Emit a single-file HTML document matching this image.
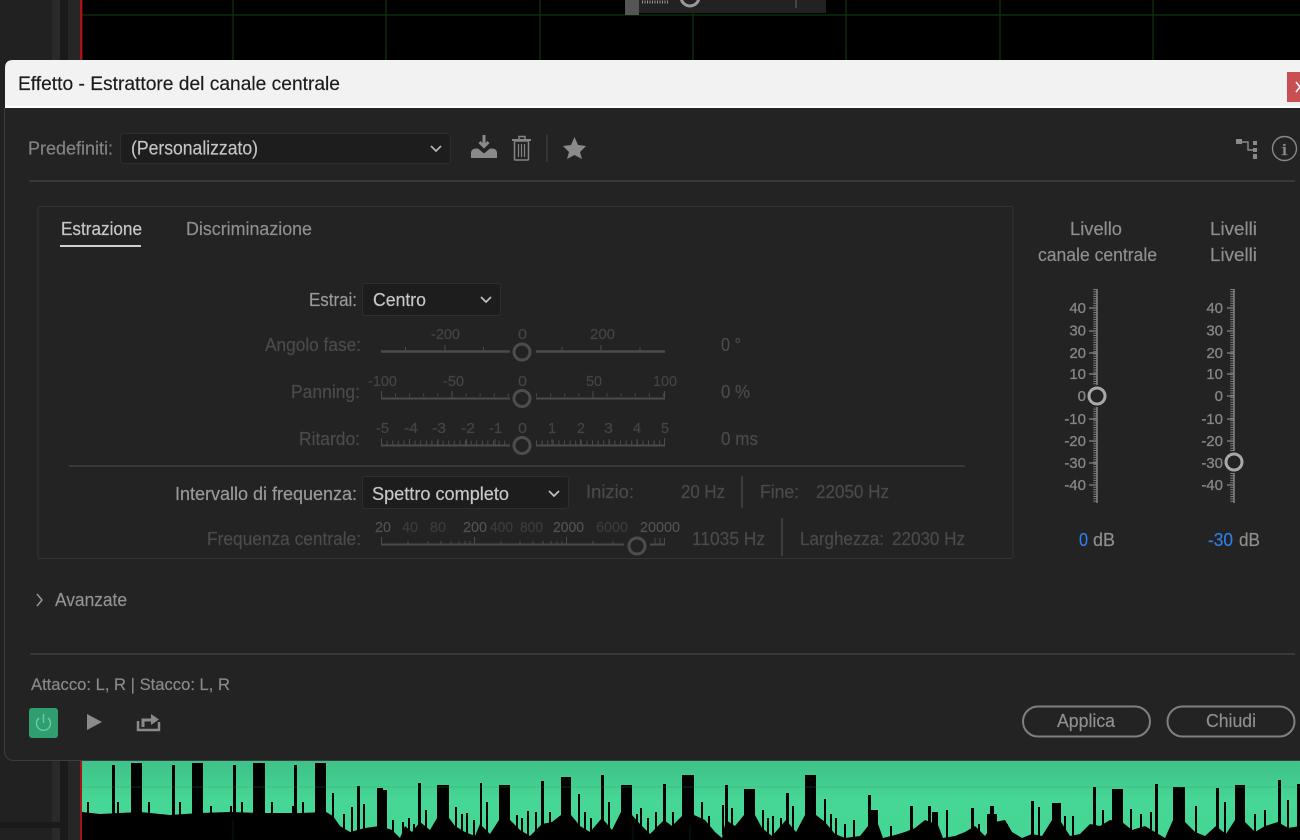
<!DOCTYPE html>
<html lang="it">
<head>
<meta charset="utf-8">
<title>Effetto - Estrattore del canale centrale</title>
<style>
html,body{margin:0;padding:0;background:#000;width:1300px;height:840px;overflow:hidden}
svg{display:block;filter:blur(.35px)}
text{font-family:"Liberation Sans",sans-serif;font-size:18px;color:#8f8f8f;fill:currentColor;stroke:currentColor;stroke-width:.18}
.d{color:#4b4b4b}
.a{color:#c8c8c8}
.s{font-size:15px;color:#454545}
.sd{font-size:15px;color:#3c3c3c}
.sb{font-size:15px;color:#525252}
.sc{font-size:15px;color:#858585;text-anchor:end;stroke-width:.3}
.t{stroke:#4b4b4b;fill:none}
.k{fill:#232323;stroke:#4d4d4d;stroke-width:3}
.kb{fill:#232323;stroke:#a8a8a8;stroke-width:3}
</style>
</head>
<body>
<svg width="1300" height="840" viewBox="0 0 1300 840" xmlns="http://www.w3.org/2000/svg">
<defs>
<linearGradient id="g" x1="0" y1="0" x2="0" y2="1"><stop offset="0" stop-color="#3fc189"/><stop offset=".25" stop-color="#42cb8e"/><stop offset=".5" stop-color="#46d695"/><stop offset="1" stop-color="#45d594"/></linearGradient>
</defs>
<!-- background -->
<rect width="1300" height="840" fill="#000"/>
<rect x="0" y="0" width="80" height="840" fill="#212121"/>
<rect x="52" y="0" width="8" height="840" fill="#2a2a2a"/>
<rect x="60" y="0" width="8" height="840" fill="#1a1a1a"/>
<rect x="68" y="0" width="12" height="840" fill="#262626"/>
<rect x="0" y="822" width="62" height="6" fill="#1a1a1a"/>
<path d="M82 15H1300M233 0V60M386 0V60M540 0V60M693 0V60M846 0V60M1000 0V60M1153 0V60" stroke="#0c360c" stroke-width="1.2" fill="none"/>
<rect x="80" y="0" width="2.4" height="840" fill="#a81318"/>
<!-- top floating control -->
<rect x="625" y="0" width="201" height="13" fill="#222"/>
<rect x="625" y="0" width="14" height="15" fill="#555"/>
<path d="M642 2H668" stroke="#999" stroke-width="3" stroke-dasharray="1 1.5"/>
<circle cx="690" cy="-3" r="9" fill="#222" stroke="#999" stroke-width="3"/>
<path d="M796 0V8" stroke="#666"/>

<!-- waveform -->
<rect x="82" y="760" width="1218" height="80" fill="url(#g)"/>
<path fill="#000" d="M82 812L100 814L120 813L140 812L170 815L200 813L230 812L260 813L300 813L326 812L333 816L340 826L350 832L365 828L380 826L392 830L400 838L405 826L412 832L420 822L430 830L437 818L449 818L455 826L465 832L475 836L480 824L490 834L499 820L510 820L520 830L530 836L542 824L552 822L561 815L571 815L580 826L590 832L602 818L612 830L621 812L632 815L640 824L650 834L664 820L672 826L682 816L694 815L705 820L715 832L722 838L726 820L735 826L744 815L755 815L762 828L772 836L786 820L796 832L805 815L816 815L825 822L835 834L845 838L860 836L868 826L878 824L883 838L895 835L905 832L915 828L925 820L938 825L943 838L955 836L965 832L975 826L985 836L995 822L1005 820L1012 832L1022 838L1032 834L1042 836L1052 820L1061 822L1070 836L1080 834L1090 824L1100 826L1110 820L1122 822L1132 830L1145 826L1155 832L1165 838L1173 820L1185 822L1195 832L1205 836L1216 826L1226 834L1235 820L1245 822L1255 832L1265 826L1278 822L1288 828L1300 826V840H82Z"/>
<path fill="#000" d="M112 765h3v60h-3zM131 763h11v60h-11zM172 765h3v60h-3zM192 763h11v60h-11zM233 765h3v60h-3zM253 763h12v60h-12zM294 765h3v60h-3zM315 763h11v60h-11z
M87 802h2v20h-2zM117 802h2v20h-2zM148 802h2v20h-2zM179 802h2v20h-2zM210 806h2v16h-2zM230 806h2v16h-2zM241 802h2v20h-2zM271 802h2v20h-2zM292 806h2v16h-2zM302 802h2v20h-2z
M332 793h2v40h-2zM343 814h2v20h-2zM351 807h2v28h-2zM357 786h3v50h-3zM363 804h2v30h-2zM377 788h6v50h-6zM383 790h4v48h-4zM392 820h2v16h-2z
M402 822h2v18h-2zM408 818h2v22h-2zM413 824h2v16h-2zM418 783h3v50h-3zM437 785h12v40h-12zM425 810h2v20h-2zM455 807h2v24h-2zM461 814h2v26h-2zM466 813h2v25h-2zM473 820h2v20h-2zM480 783h2v50h-2zM486 802h2v36h-2zM499 785h11v40h-11zM516 815h2v20h-2zM521 818h2v22h-2zM527 811h2v25h-2zM541 781h3v50h-3zM535 812h2v24h-2zM549 812h2v22h-2zM561 777h9v50h-9zM568 777h3v50h-3zM578 794h2v36h-2zM584 812h2v26h-2zM590 818h2v20h-2zM601 775h3v50h-3zM608 802h2v34h-2zM621 785h11v40h-11zM636 814h2v26h-2zM640 808h2v28h-2zM647 818h2v22h-2zM663 784h3v50h-3zM655 812h2v24h-2zM672 812h2v24h-2zM682 775h8v50h-8zM689 775h5v50h-5zM701 802h2v30h-2zM708 816h2v24h-2zM725 785h3v50h-3zM722 805h2v30h-2zM731 808h2v32h-2zM744 789h11v40h-11zM762 810h2v24h-2zM767 818h2v22h-2zM772 816h2v24h-2zM780 818h2v22h-2zM786 793h3v45h-3zM792 806h2v34h-2zM805 775h6v50h-6zM811 775h5v50h-5zM824 799h2v40h-2zM830 814h2v24h-2zM835 818h2v22h-2zM844 824h2v16h-2zM853 820h2v20h-2zM868 795h3v44h-3zM868 810h10v30h-10zM890 826h2v14h-2zM910 806h3v34h-3zM928 806h3v34h-3zM932 812h6v28h-6zM946 810h2v30h-2zM971 808h3v32h-3zM978 824h2v16h-2zM990 806h4v34h-4zM987 814h10v26h-10zM1006 824h2v16h-2zM1031 801h3v36h-3zM1038 807h2v33h-2zM1052 803h9v37h-9zM1064 816h2v24h-2zM1072 816h2v24h-2zM1093 787h3v45h-3zM1102 810h2v25h-2zM1112 789h11v40h-11zM1130 809h2v24h-2zM1140 814h2v24h-2zM1155 784h3v50h-3zM1150 812h2v20h-2zM1173 787h12v40h-12zM1195 806h2v28h-2zM1216 788h3v42h-3zM1224 802h2v36h-2zM1235 785h10v40h-10zM1254 814h2v20h-2zM1264 810h2v24h-2zM1278 780h3v50h-3zM1287 800h2v34h-2zM1297 784h3v50h-3z"/>
<path d="M82 787H1300" stroke="#2f9a68" stroke-width=".7" opacity=".35" fill="none"/>
<path d="M233 840V820M633 840V825M690 840V825" stroke="#0d4a2a" stroke-width=".8" opacity=".5" fill="none"/>

<!-- dialog -->
<path d="M4 108H1300V760H14Q4 760 4 750Z" fill="#232323"/>
<path d="M4.500 108V750Q4.500 760 14 760.500H1300" fill="none" stroke="#3d3d3d"/>
<path d="M5 108V68Q5 60 13 60H1300V108Z" fill="#f2f2f2"/>
<rect x="5" y="106" width="1295" height="2" fill="#fff"/>
<rect x="1287" y="72" width="13" height="30" fill="#c94f52"/>
<path d="M1296 82L1300 87L1296 92" stroke="#fff" stroke-width="1.600" fill="none"/>
<text x="18" y="90" textLength="322" lengthAdjust="spacingAndGlyphs" style="font-size:19.500px;color:#1c1c1c">Effetto - Estrattore del canale centrale</text>

<!-- toolbar -->
<text x="28" y="154.500" textLength="85" lengthAdjust="spacingAndGlyphs" style="color:#848484">Predefiniti:</text>
<rect x="120.500" y="133.500" width="330" height="30" rx="3" fill="#1d1d1d" stroke="#2d2d2d"/>
<text x="131" y="154.500" textLength="127" lengthAdjust="spacingAndGlyphs" style="font-size:19px;color:#c4c4c4">(Personalizzato)</text>
<path d="M431 146L436 151L441 146" stroke="#b5b5b5" stroke-width="1.700" fill="none"/>
<path d="M484 135V146M479.500 142L484 146.500L488.500 142" stroke="#8a8a8a" stroke-width="3" fill="none"/>
<path d="M471 158V152Q472 148.500 476 148.500H478L484 153.500L490 148.500H492Q496 148.500 497 152V158Z" fill="#8a8a8a"/>
<g stroke="#858585" fill="none"><path d="M512 140H531" stroke-width="2"/><path d="M519 139V136.500H525V139" stroke-width="1.500"/><rect x="514.500" y="141" width="14" height="19" rx="1" stroke-width="1.500"/><path d="M518.500 144V157M521.500 144V157M524.500 144V157" stroke-width="1.200"/></g>
<path d="M547 135V162" stroke="#3a3a3a" stroke-width="1.500"/>
<path d="M574.500 137L578 145L586 146L580 152L582 159L574.500 155L567 159L569 152L563 146L571 145Z" fill="#8a8a8a"/>
<g fill="#8a8a8a"><rect x="1236" y="139" width="6" height="5"/><rect x="1253" y="141" width="4" height="4"/><rect x="1253" y="148" width="4" height="4"/><rect x="1253" y="154" width="4" height="5"/></g>
<path d="M1242 142H1248V150H1253" stroke="#8a8a8a" stroke-width="1.400" fill="none"/>
<circle cx="1284.500" cy="148.500" r="12" fill="none" stroke="#888" stroke-width="1.400"/>
<text x="1281" y="155" textLength="7" lengthAdjust="spacingAndGlyphs" style="font-family:'Liberation Serif',serif;font-size:17px;color:#8d8d8d">i</text>
<rect x="29" y="180" width="1266" height="2" fill="#383838"/>

<!-- panel -->
<rect x="38" y="206.500" width="975" height="352" rx="2" fill="#232323" stroke="#333"/>
<text x="61" y="235" textLength="81" lengthAdjust="spacingAndGlyphs" class="a">Estrazione</text>
<rect x="60" y="245" width="81" height="2" fill="#d0d0d0"/>
<text x="186" y="235" textLength="126" lengthAdjust="spacingAndGlyphs">Discriminazione</text>

<text x="309" y="306" textLength="48" lengthAdjust="spacingAndGlyphs" style="color:#9a9a9a">Estrai:</text>
<rect x="362.500" y="283.500" width="138" height="32" rx="3" fill="#1d1d1d" stroke="#2e2e2e"/>
<text x="373" y="306" textLength="53" lengthAdjust="spacingAndGlyphs" class="a">Centro</text>
<path d="M481 297L486 302L491 297" stroke="#c0c0c0" stroke-width="1.700" fill="none"/>

<!-- fase -->
<text x="265" y="351" textLength="96" lengthAdjust="spacingAndGlyphs" class="d">Angolo fase:</text>
<text x="431" y="339" textLength="29" lengthAdjust="spacingAndGlyphs" class="s">-200</text>
<text x="518" y="339" textLength="9" lengthAdjust="spacingAndGlyphs" class="s">0</text>
<text x="590" y="339" textLength="25" lengthAdjust="spacingAndGlyphs" class="s">200</text>
<path class="t" stroke-width="2.500" d="M381 351.500H510M536 351.500H665"/>
<path class="t" d="M405.500 347V351M445 345V351M483.500 347V351M562 347V351M601 345V351M640 347V351"/>
<circle class="k" cx="522" cy="352" r="8"/>
<text x="721" y="351" textLength="20" lengthAdjust="spacingAndGlyphs" class="d">0 °</text>

<!-- panning -->
<text x="291" y="398" textLength="69" lengthAdjust="spacingAndGlyphs" class="d">Panning:</text>
<text x="368" y="386" textLength="29" lengthAdjust="spacingAndGlyphs" class="s">-100</text>
<text x="443" y="386" textLength="21" lengthAdjust="spacingAndGlyphs" class="s">-50</text>
<text x="518" y="386" textLength="9" lengthAdjust="spacingAndGlyphs" class="s">0</text>
<text x="586" y="386" textLength="16" lengthAdjust="spacingAndGlyphs" class="s">50</text>
<text x="653" y="386" textLength="24" lengthAdjust="spacingAndGlyphs" class="s">100</text>
<path class="t" stroke-width="2" d="M381 398.500H510M536 398.500H665"/>
<path class="t" d="M381.500 391V398M664.500 391V398M452 391V398M593 391V398"/>
<path d="M395 395H510M536 395H665" stroke="#4b4b4b" stroke-width="3" stroke-dasharray="1 13.100" fill="none"/>
<circle class="k" cx="522" cy="398.500" r="8"/>
<text x="721" y="398" textLength="29" lengthAdjust="spacingAndGlyphs" class="d">0 %</text>

<!-- ritardo -->
<text x="299" y="445" textLength="61" lengthAdjust="spacingAndGlyphs" class="d">Ritardo:</text>
<text x="376" y="433" textLength="13" lengthAdjust="spacingAndGlyphs" class="s">-5</text>
<text x="404" y="433" textLength="14" lengthAdjust="spacingAndGlyphs" class="s">-4</text>
<text x="432" y="433" textLength="14" lengthAdjust="spacingAndGlyphs" class="s">-3</text>
<text x="461" y="433" textLength="14" lengthAdjust="spacingAndGlyphs" class="s">-2</text>
<text x="489" y="433" textLength="13" lengthAdjust="spacingAndGlyphs" class="s">-1</text>
<text x="518" y="433" textLength="9" lengthAdjust="spacingAndGlyphs" class="s">0</text>
<text x="548" y="433" textLength="8" lengthAdjust="spacingAndGlyphs" class="s">1</text>
<text x="577" y="433" textLength="8" lengthAdjust="spacingAndGlyphs" class="s">2</text>
<text x="604" y="433" textLength="9" lengthAdjust="spacingAndGlyphs" class="s">3</text>
<text x="633" y="433" textLength="8" lengthAdjust="spacingAndGlyphs" class="s">4</text>
<text x="661" y="433" textLength="8" lengthAdjust="spacingAndGlyphs" class="s">5</text>
<path class="t" stroke-width="2" d="M381 445.500H510M536 445.500H665"/>
<path d="M381 442.500H510M536 442.500H665" stroke="#4b4b4b" stroke-width="4" stroke-dasharray="1 4.600" fill="none"/>
<path class="t" d="M381.500 438V445M664.500 438V445M409.500 439V445M438 439V445M466.500 439V445M495 439V445M552 439V445M580.500 439V445M609 439V445M637 439V445"/>
<circle class="k" cx="522" cy="445.500" r="8"/>
<text x="721" y="445" textLength="37" lengthAdjust="spacingAndGlyphs" class="d">0 ms</text>

<rect x="69" y="465" width="896" height="2" fill="#383838"/>

<!-- frequency -->
<text x="175" y="500" textLength="182" lengthAdjust="spacingAndGlyphs" style="color:#9a9a9a">Intervallo di frequenza:</text>
<rect x="362.500" y="476.500" width="206" height="32" rx="3" fill="#1d1d1d" stroke="#2e2e2e"/>
<text x="372" y="500" textLength="137" lengthAdjust="spacingAndGlyphs" class="a">Spettro completo</text>
<path d="M549 491L554 496L559 491" stroke="#c0c0c0" stroke-width="1.700" fill="none"/>
<text x="586" y="498" textLength="48" lengthAdjust="spacingAndGlyphs" class="d">Inizio:</text>
<text x="681" y="498" textLength="44" lengthAdjust="spacingAndGlyphs" class="d">20 Hz</text>
<path d="M742 476V508" stroke="#3d3d3d" stroke-width="2"/>
<text x="760" y="498" textLength="39" lengthAdjust="spacingAndGlyphs" class="d">Fine:</text>
<text x="816" y="498" textLength="73" lengthAdjust="spacingAndGlyphs" class="d">22050 Hz</text>

<text x="207" y="545" textLength="154" lengthAdjust="spacingAndGlyphs" class="d">Frequenza centrale:</text>
<text x="375" y="532" textLength="16" lengthAdjust="spacingAndGlyphs" class="sb">20</text>
<text x="402" y="532" textLength="16" lengthAdjust="spacingAndGlyphs" class="sd">40</text>
<text x="430" y="532" textLength="16" lengthAdjust="spacingAndGlyphs" class="sd">80</text>
<text x="463" y="532" textLength="24" lengthAdjust="spacingAndGlyphs" class="sb">200</text>
<text x="490" y="532" textLength="23" lengthAdjust="spacingAndGlyphs" class="sd">400</text>
<text x="520" y="532" textLength="23" lengthAdjust="spacingAndGlyphs" class="sd">800</text>
<text x="553" y="532" textLength="31" lengthAdjust="spacingAndGlyphs" class="sb">2000</text>
<text x="596" y="532" textLength="32" lengthAdjust="spacingAndGlyphs" class="sd">6000</text>
<text x="640" y="532" textLength="40" lengthAdjust="spacingAndGlyphs" class="sb">20000</text>
<path class="t" stroke-width="2" d="M381 544.500H624M650 544.500H665"/>
<path class="t" d="M381.500 537V544M408 541V544M428 541V544M441 541V544M451 541V544M459 541V544M465 541V544M470 541V544M474.500 537V544M501 541V544M520 541V544M533 541V544M543 541V544M551 541V544M557 541V544M562 541V544M566.500 537V544M593 541V544M613 541V544M655 538V544M660 538V544M664.500 538V544"/>
<circle class="k" cx="637" cy="546" r="8"/>
<text x="692" y="545" textLength="73" lengthAdjust="spacingAndGlyphs" class="d">11035 Hz</text>
<path d="M782 518V556" stroke="#3d3d3d" stroke-width="2"/>
<text x="800" y="545" textLength="84" lengthAdjust="spacingAndGlyphs" class="d">Larghezza:</text>
<text x="892" y="545" textLength="73" lengthAdjust="spacingAndGlyphs" class="d">22030 Hz</text>

<!-- right meters -->
<text x="1070" y="235" textLength="52" lengthAdjust="spacingAndGlyphs">Livello</text>
<text x="1038" y="261" textLength="119" lengthAdjust="spacingAndGlyphs">canale centrale</text>
<text x="1210" y="235" textLength="47" lengthAdjust="spacingAndGlyphs">Livelli</text>
<text x="1210" y="261" textLength="47" lengthAdjust="spacingAndGlyphs">Livelli</text>

<path d="M1095 289V503" stroke="#7d7d7d" stroke-width="3.500" stroke-dasharray="1 1.300" fill="none"/>
<path d="M1097 289V503" stroke="#858585" stroke-width="1.500" fill="none"/>
<path d="M1089 308H1097M1089 331H1097M1089 353H1097M1089 374H1097M1089 419H1097M1089 441H1097M1089 463H1097M1089 485H1097" stroke="#858585" stroke-width="1.200" fill="none"/>
<rect x="1086" y="385" width="22" height="22" fill="#232323"/>
<circle class="kb" cx="1097" cy="396" r="8"/>
<text class="sc" x="1086" y="313">40</text><text class="sc" x="1086" y="335.500">30</text><text class="sc" x="1086" y="358">20</text><text class="sc" x="1086" y="379">10</text><text class="sc" x="1086" y="401">0</text><text class="sc" x="1086" y="424">-10</text><text class="sc" x="1086" y="446">-20</text><text class="sc" x="1086" y="468">-30</text><text class="sc" x="1086" y="490">-40</text>

<path d="M1232 289V503" stroke="#7d7d7d" stroke-width="3.500" stroke-dasharray="1 1.300" fill="none"/>
<path d="M1234 289V503" stroke="#858585" stroke-width="1.500" fill="none"/>
<path d="M1227 308H1234M1227 331H1234M1227 353H1234M1227 374H1234M1227 396H1234M1227 419H1234M1227 441H1234M1227 485H1234" stroke="#858585" stroke-width="1.200" fill="none"/>
<rect x="1223" y="451" width="22" height="22" fill="#232323"/>
<circle class="kb" cx="1234" cy="462" r="8"/>
<text class="sc" x="1223" y="313">40</text><text class="sc" x="1223" y="335.500">30</text><text class="sc" x="1223" y="358">20</text><text class="sc" x="1223" y="379">10</text><text class="sc" x="1223" y="401">0</text><text class="sc" x="1223" y="424">-10</text><text class="sc" x="1223" y="446">-20</text><text class="sc" x="1223" y="468">-30</text><text class="sc" x="1223" y="490">-40</text>

<text x="1079" y="546" textLength="9" lengthAdjust="spacingAndGlyphs" style="color:#2f7fe6">0</text>
<text x="1093" y="546" textLength="22" lengthAdjust="spacingAndGlyphs">dB</text>
<text x="1208" y="546" textLength="25" lengthAdjust="spacingAndGlyphs" style="color:#2f7fe6">-30</text>
<text x="1239" y="546" textLength="21" lengthAdjust="spacingAndGlyphs">dB</text>

<!-- advanced -->
<path d="M37 594L42 600L37 606" stroke="#9a9a9a" stroke-width="1.400" fill="none"/>
<text x="55" y="606" textLength="72" lengthAdjust="spacingAndGlyphs" style="color:#939393">Avanzate</text>
<rect x="30" y="653" width="1265" height="2" fill="#383838"/>

<!-- footer -->
<text x="31" y="690" textLength="199" lengthAdjust="spacingAndGlyphs" style="font-size:17px;color:#8a8a8a">Attacco: L, R | Stacco: L, R</text>
<rect x="29" y="708" width="29" height="30" rx="3" fill="#2f9f70"/>
<path d="M39 718A7 7 0 1 0 48 718M43.500 714V723" stroke="#6fc69f" stroke-width="1.500" fill="none"/>
<path d="M87 714L102 722L87 730Z" fill="#8a8a8a"/>
<path d="M138 721V730H159V722" stroke="#8a8a8a" stroke-width="2.500" fill="none"/>
<path d="M143 727V720H152" stroke="#8a8a8a" stroke-width="3" fill="none"/>
<path d="M151 714L159 719.500L151 725Z" fill="#8a8a8a"/>

<rect x="1023" y="706.500" width="127" height="30" rx="15" fill="#232323" stroke="#808080" stroke-width="2"/>
<text x="1057" y="727" textLength="58" lengthAdjust="spacingAndGlyphs" style="color:#8f8f8f">Applica</text>
<rect x="1167.500" y="706.500" width="127" height="30" rx="15" fill="#232323" stroke="#808080" stroke-width="2"/>
<text x="1206" y="727" textLength="50" lengthAdjust="spacingAndGlyphs" style="color:#8f8f8f">Chiudi</text>
</svg>
</body>
</html>
